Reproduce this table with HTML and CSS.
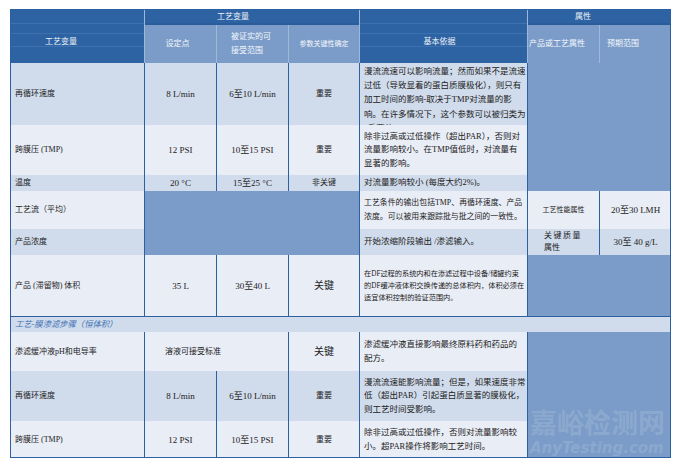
FILE: index.html
```html
<!DOCTYPE html>
<html lang="zh">
<head>
<meta charset="utf-8">
<title>工艺变量</title>
<link rel="stylesheet" href="styles.css">
</head>
<body>
<div class="sheet">
  <div class="c h-dark stripes h-var">工艺变量</div>
  <div class="c h-dark hl h-top">工艺变量</div>
  <div class="c h-dark stripes hl h-basis">基本依据</div>
  <div class="c h-dark hl h-attr">属性</div>
  <div class="c h-light hl sub-set">设定点</div>
  <div class="c h-light hl sub-range"><div>被证实的可<br>接受范围</div></div>
  <div class="c h-light hl sub-crit">参数关键性确定</div>
  <div class="c h-light hl sub-prod">产品或工艺属性</div>
  <div class="c h-light hl sub-exp">预期范围</div>

  <div class="c ra name">再循环速度</div>
  <div class="c ra bl val">8 L/min</div>
  <div class="c ra bl val">6至10 L/min</div>
  <div class="c ra bl crit">重要</div>
  <div class="c ra bl basis top"><div>漫流流速可以影响流量；然而如果不是流速<br>过低（导致显着的蛋白质膜极化），则只有<br>加工时间的影响-取决于TMP对流量的影<br>响。在许多情况下，这个参数可以被归类为<br>“重要的”。</div></div>
  <div class="c blue bl attr-top"></div>

  <div class="c rb name">跨膜压 (TMP)</div>
  <div class="c rb bl val">12 PSI</div>
  <div class="c rb bl val">10至15 PSI</div>
  <div class="c rb bl crit">重要</div>
  <div class="c rb bl basis"><div>除非过高或过低操作（超出PAR），否则对<br>流量影响较小。在TMP值低时，对流量有<br>显著的影响。</div></div>

  <div class="c ra name">温度</div>
  <div class="c ra bl val">20 °C</div>
  <div class="c ra bl val">15至25 °C</div>
  <div class="c ra bl crit">非关键</div>
  <div class="c ra bl basis">对流量影响较小 (每度大约2%)。</div>

  <div class="c rb name">工艺流（平均）</div>
  <div class="c blue bl flow-blank"></div>
  <div class="c rb bl basis tight"><div>工艺条件的输出包括TMP、再循环速度、产品<br>浓度。可以被用来跟踪批与批之间的一致性。</div></div>
  <div class="c rb bl attr-c tiny">工艺性能属性</div>
  <div class="c rb bl attr-c val">20至30 LMH</div>

  <div class="c ra name">产品浓度</div>
  <div class="c ra bl basis">开始浓缩阶段输出 /渗滤输入。</div>
  <div class="c ra bl kq"><div><span class="sp">关键质量</span><br>属性</div></div>
  <div class="c ra bl attr-c val">30至 40 g/L</div>

  <div class="c rb bb name">产品 (滞留物) 体积</div>
  <div class="c rb bb bl val">35 L</div>
  <div class="c rb bb bl val">30至40 L</div>
  <div class="c rb bb bl crit big">关键</div>
  <div class="c rb bb bl basis small"><div>在DF过程的系统内和在渗滤过程中设备/储罐约束<br>的DF缓冲液体积交换传递的总体积内，体积必须在<br>适宜体积控制的验证范围内。</div></div>
  <div class="c blue bb bl span2"></div>

  <div class="c ra section">工艺-膜渗滤步骤（恒体积）</div>

  <div class="c rb name">渗滤缓冲液pH和电导率</div>
  <div class="c rb bl span2 accept">溶液可接受标准</div>
  <div class="c rb bl crit big">关键</div>
  <div class="c rb bl basis"><div>渗滤缓冲液直接影响最终原料药和药品的<br>配方。</div></div>
  <div class="c blue bl attr-bottom"></div>

  <div class="c ra name">再循环速度</div>
  <div class="c ra bl val">8 L/min</div>
  <div class="c ra bl val">6至10 L/min</div>
  <div class="c ra bl crit">重要</div>
  <div class="c ra bl basis"><div>漫流流速能影响流量；但是，如果速度非常<br>低（超出PAR）引起蛋白质显著的膜极化，<br>则工艺时间受影响。</div></div>

  <div class="c rb name">跨膜压 (TMP)</div>
  <div class="c rb bl val">12 PSI</div>
  <div class="c rb bl val">10至15 PSI</div>
  <div class="c rb bl crit">重要</div>
  <div class="c rb bl basis"><div>除非过高或过低操作，否则对流量影响较<br>小。超PAR操作将影响工艺时间。</div></div>

  <div class="wm-cn">嘉峪检测网</div>
  <div class="wm-en">AnyTesting.com</div>
</div>
</body>
</html>
```
FILE: styles.css
```css
* { box-sizing: border-box; }

body {
  margin: 0;
  padding: 9px 0 0 10px;
  background: #ffffff;
  font-family: "Liberation Serif", "Noto Sans CJK SC", serif;
  color: #222222;
}

.sheet {
  position: relative;
  display: grid;
  width: 661px;
  grid-template-columns: 134px 72px 72px 71px 168px 72px 72px;
  grid-template-rows: 16px 38px 62px 50px 16px 38px 26px 62px 15px 39px 50px 37px;
}

.sheet::after {
  content: "";
  position: absolute;
  inset: 0;
  border: 1px solid #2c61a1;
  pointer-events: none;
}

.c {
  display: flex;
  align-items: center;
  overflow: hidden;
  white-space: nowrap;
  font-size: 8px;
  line-height: 12px;
}

.bl { border-left: 1px solid #2c61a1; }
.hl { border-left: 1px solid #9fb7d9; }
.bb { border-bottom: 1px solid #2c61a1; }

/* header */
.h-dark { background-color: #2d63a2; color: #eef2f9; }
.h-light { background: #7b9cc8; color: #f4f7fc; }

.stripes {
  background-image:
    linear-gradient(#3d72b0, #3d72b0),
    linear-gradient(#3d72b0, #3d72b0),
    linear-gradient(#3d72b0, #3d72b0);
  background-size: 100% 1px;
  background-repeat: no-repeat;
  background-position: 0 14px, 0 24px, 0 37px;
}

.h-var { grid-area: 1 / 1 / 3 / 2; padding: 11px 0 0 35px; }
.h-top { grid-column: span 3; padding-left: 72px; box-shadow: inset 0 -2px #295c99; }
.h-basis { grid-area: 1 / 5 / 3 / 6; justify-content: center; padding: 11px 8px 0 0; }
.h-attr { grid-column: span 2; padding-left: 47px; box-shadow: inset 0 -2px #295c99; }

.sub-set { justify-content: center; padding-right: 6px; }
.sub-range { padding-left: 14px; line-height: 14px; }
.sub-crit { justify-content: center; font-size: 7px; }
.sub-prod { padding-left: 1px; }
.sub-exp { padding-left: 7px; }

/* body rows */
.ra { background: #d0dbeb; }
.rb { background: #e9edf6; }
.blue { background: #7b9cc8; }

.name { padding-left: 5px; }
.val { justify-content: center; font-size: 9px; }
.crit { justify-content: center; }
.big { font-size: 10px; }

.basis {
  padding-left: 4px;
  font-size: 8.5px;
  line-height: 13.5px;
}
.basis.top { align-items: flex-start; padding-top: 1px; line-height: 14.2px; }
.basis.tight { font-size: 7.9px; line-height: 14px; }
.basis.small { font-size: 7.2px; line-height: 12px; }

.attr-top { grid-area: 3 / 6 / 6 / 8; }
.flow-blank { grid-area: 6 / 2 / 8 / 5; }
.attr-bottom { grid-area: 10 / 6 / 13 / 8; }
.span2 { grid-column: span 2; }

.attr-c { justify-content: center; }
.tiny { font-size: 7px; }
.kq { padding-left: 16px; }
.kq .sp { letter-spacing: 1.5px; }

.section {
  grid-column: 1 / -1;
  padding-left: 5px;
  font-style: italic;
  color: #3f73b4;
  font-size: 8.3px;
}

.accept { padding-left: 20px; }

/* watermark */
.wm-cn {
  position: absolute;
  left: 520px;
  top: 399px;
  font-family: "Noto Sans CJK SC", sans-serif;
  font-weight: 700;
  font-size: 27px;
  line-height: 27px;
  color: rgba(255, 255, 255, 0.15);
  white-space: nowrap;
}

.wm-en {
  position: absolute;
  left: 520px;
  top: 432px;
  font-family: "DejaVu Sans", sans-serif;
  font-weight: 700;
  font-style: italic;
  font-size: 15px;
  line-height: 14px;
  color: rgba(255, 255, 255, 0.15);
  white-space: nowrap;
}
```
